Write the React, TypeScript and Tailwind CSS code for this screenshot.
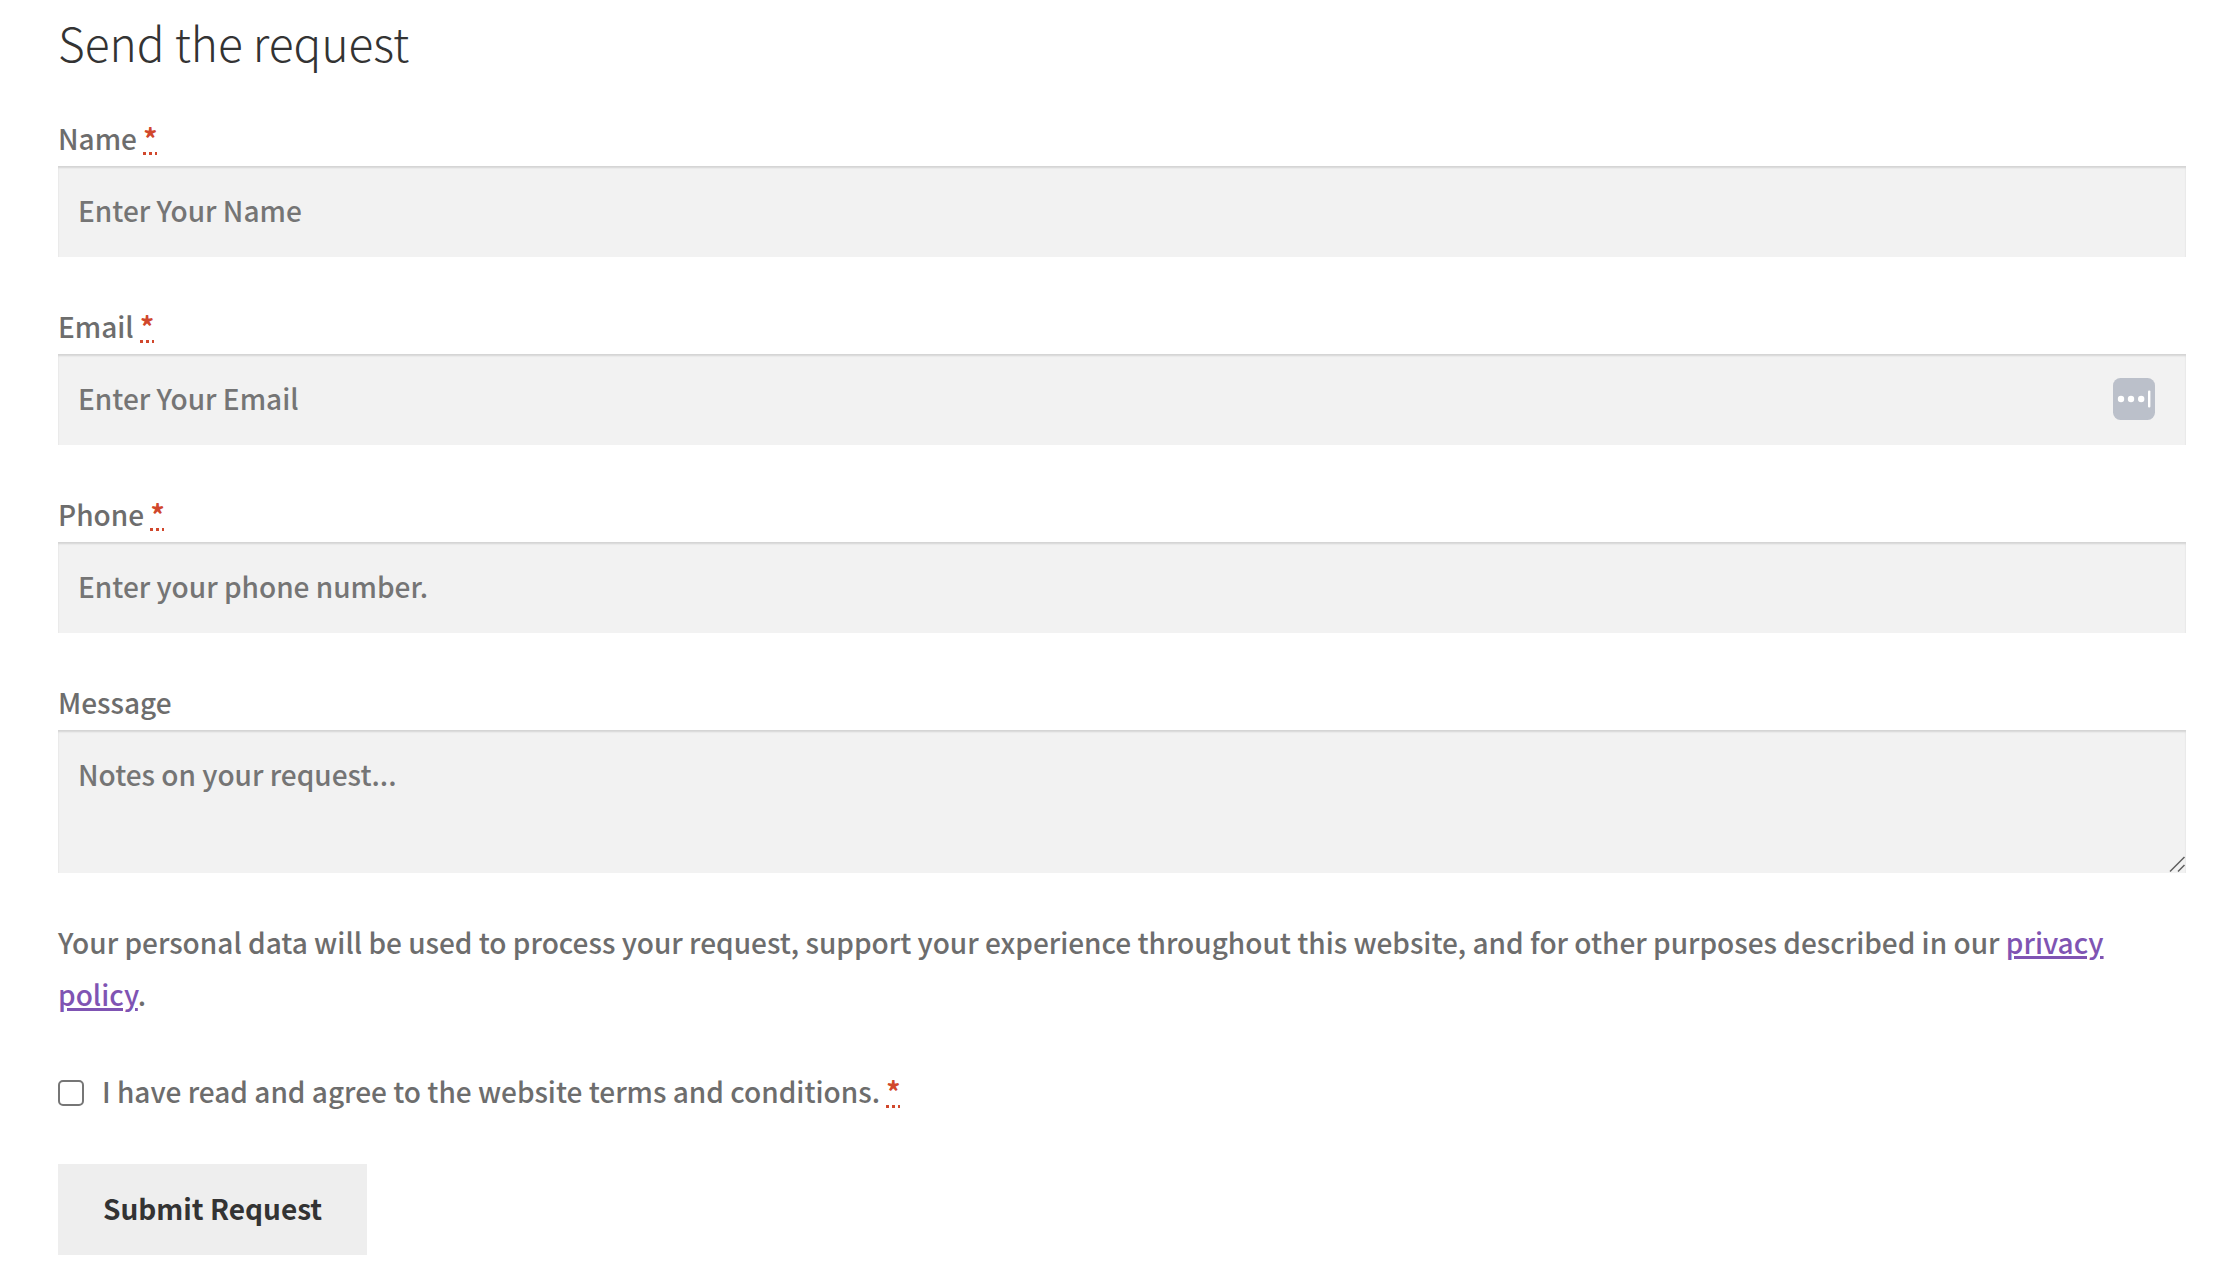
import type { ReactNode } from "react";

interface FieldProps {
  id: string;
  label: string;
  required?: boolean;
  children: ReactNode;
}

const control =
  "block w-full bg-[#f2f2f2] px-5 text-[28px] leading-[52px] text-[#43454b] placeholder:text-[#757575] placeholder:opacity-100 shadow-[inset_0_2px_2px_rgba(0,0,0,0.125)] outline-none";

function Required() {
  return (
    <abbr
      title="required"
      className="font-bold text-[#d1472c] underline decoration-dotted decoration-[3px] underline-offset-2"
    >
      *
    </abbr>
  );
}

function Field({ id, label, required, children }: FieldProps) {
  return (
    <div className="mb-[43px]">
      <label htmlFor={id} className="mb-0.5 block">
        {label} {required && <Required />}
      </label>
      <div className="relative">{children}</div>
    </div>
  );
}

// password manager badge inside the email box
function AutofillIcon() {
  return (
    <svg viewBox="0 0 42 42" className="absolute top-6 right-[31px] size-[42px]" aria-hidden="true">
      <rect width="42" height="42" rx="7.5" fill="#bbc0ca" />
      <circle cx="8" cy="21" r="3.2" fill="#fff" />
      <circle cx="18" cy="21" r="3.2" fill="#fff" />
      <circle cx="28.2" cy="21" r="3.2" fill="#fff" />
      <rect x="35" y="12.5" width="2.4" height="17" rx="1" fill="#fff" />
    </svg>
  );
}

function ResizeGrip() {
  return (
    <svg viewBox="0 0 18 18" className="pointer-events-none absolute right-0 bottom-0 size-[18px]" aria-hidden="true">
      <path d="M2 16.5 16.5 2M10 16.5 16.5 10" stroke="#5f5f5f" strokeWidth="1.5" fill="none" />
    </svg>
  );
}

export default function App() {
  return (
    <form className="bg-white pt-2 pr-10 pb-4 pl-[58px] font-['Noto_Sans_CJK_SC',sans-serif] text-[28px] leading-[52px] font-medium text-[#6d6d6d]">
      <h2 className="mb-9 text-[46px] leading-[68px] font-light text-[#333333]">Send the request</h2>

      <Field id="name" label="Name" required>
        <input id="name" type="text" placeholder="Enter Your Name" className={`${control} h-[91px] pb-1`} />
      </Field>
      <Field id="email" label="Email" required>
        <input id="email" type="email" placeholder="Enter Your Email" className={`${control} h-[91px] pb-1`} />
        <AutofillIcon />
      </Field>
      <Field id="phone" label="Phone" required>
        <input id="phone" type="tel" placeholder="Enter your phone number." className={`${control} h-[91px] pb-1`} />
      </Field>
      <Field id="message" label="Message">
        <textarea
          id="message"
          placeholder="Notes on your request..."
          className={`${control} h-[143px] resize-y pt-[18px] pb-5 [&::-webkit-resizer]:hidden`}
        />
        <ResizeGrip />
      </Field>

      <p className="mb-[45px]">
        Your personal data will be used to process your request, support your experience throughout this website, and for
        other purposes described in our{" "}
        <a href="#privacy" className="text-[#7f54b3] underline decoration-[3px] underline-offset-2">
          privacy policy
        </a>
        .
      </p>

      <div className="mb-[47px] flex items-center">
        <input
          id="terms"
          type="checkbox"
          className="mt-1 mr-[18px] size-[26px] appearance-none rounded-[5px] border-2 border-[#767676] bg-white checked:bg-[#7f54b3]"
        />
        <label htmlFor="terms">
          I have read and agree to the website terms and conditions. <Required />
        </label>
      </div>

      <button type="submit" className="h-[91px] bg-[#eeeeee] px-[45px] pb-1 font-bold text-[#333333]">
        Submit Request
      </button>
    </form>
  );
}
